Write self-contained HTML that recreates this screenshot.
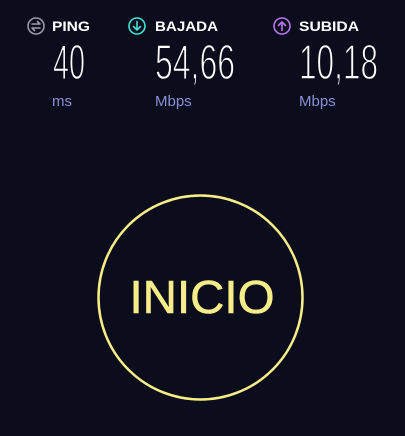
<!DOCTYPE html>
<html><head><meta charset="utf-8"><style>
html,body{margin:0;padding:0;background:#0b0d1c;width:405px;height:436px;overflow:hidden}
svg{display:block}
</style></head><body>
<svg width="405" height="436" viewBox="0 0 405 436" xmlns="http://www.w3.org/2000/svg" font-family="Liberation Sans, sans-serif">
<rect width="405" height="436" fill="#0b0d1c"/>
<g fill="none" stroke="#9a9cab" stroke-width="1.6" stroke-linecap="round" stroke-linejoin="round">
<circle cx="36" cy="26" r="8"/>
<path d="M32 24h8M37.5 21.5L40 24"/>
<path d="M40 28h-8M34.5 30.5L32 28"/>
</g>
<g fill="none" stroke="#3fe3d3" stroke-width="1.6" stroke-linecap="round" stroke-linejoin="round">
<circle cx="137" cy="26" r="8"/>
<path d="M137 21.5v8.5M133.5 26.5L137 30l3.5-3.5"/>
</g>
<g fill="none" stroke="#b677ee" stroke-width="1.6" stroke-linecap="round" stroke-linejoin="round">
<circle cx="282" cy="26" r="8"/>
<path d="M282 30.5V22M278.5 25.5L282 22l3.5 3.5"/>
</g>
<g fill="#ffffff" font-weight="bold" font-size="14">
<text x="52" y="31" textLength="38" lengthAdjust="spacingAndGlyphs">PING</text>
<text x="155" y="31" textLength="63" lengthAdjust="spacingAndGlyphs">BAJADA</text>
<text x="299" y="31" textLength="60" lengthAdjust="spacingAndGlyphs">SUBIDA</text>
</g>
<g fill="#ffffff" font-size="49" stroke="#0b0d1c" stroke-width="1.4">
<text x="53" y="79" textLength="32" lengthAdjust="spacingAndGlyphs">40</text>
<text x="155" y="79" textLength="80" lengthAdjust="spacingAndGlyphs">54,66</text>
<text x="299" y="79" textLength="79" lengthAdjust="spacingAndGlyphs">10,18</text>
</g>
<g fill="#8b8fd4" font-size="15">
<text x="52" y="106">ms</text>
<text x="155" y="106">Mbps</text>
<text x="299" y="106">Mbps</text>
</g>
<circle cx="200.5" cy="297.5" r="102" fill="none" stroke="#f7ed88" stroke-width="2.5"/>
<text x="202" y="313" text-anchor="middle" fill="#f7ed88" stroke="#f7ed88" stroke-width="0.6" font-size="46" textLength="145" lengthAdjust="spacingAndGlyphs">INICIO</text>
</svg>
</body></html>
